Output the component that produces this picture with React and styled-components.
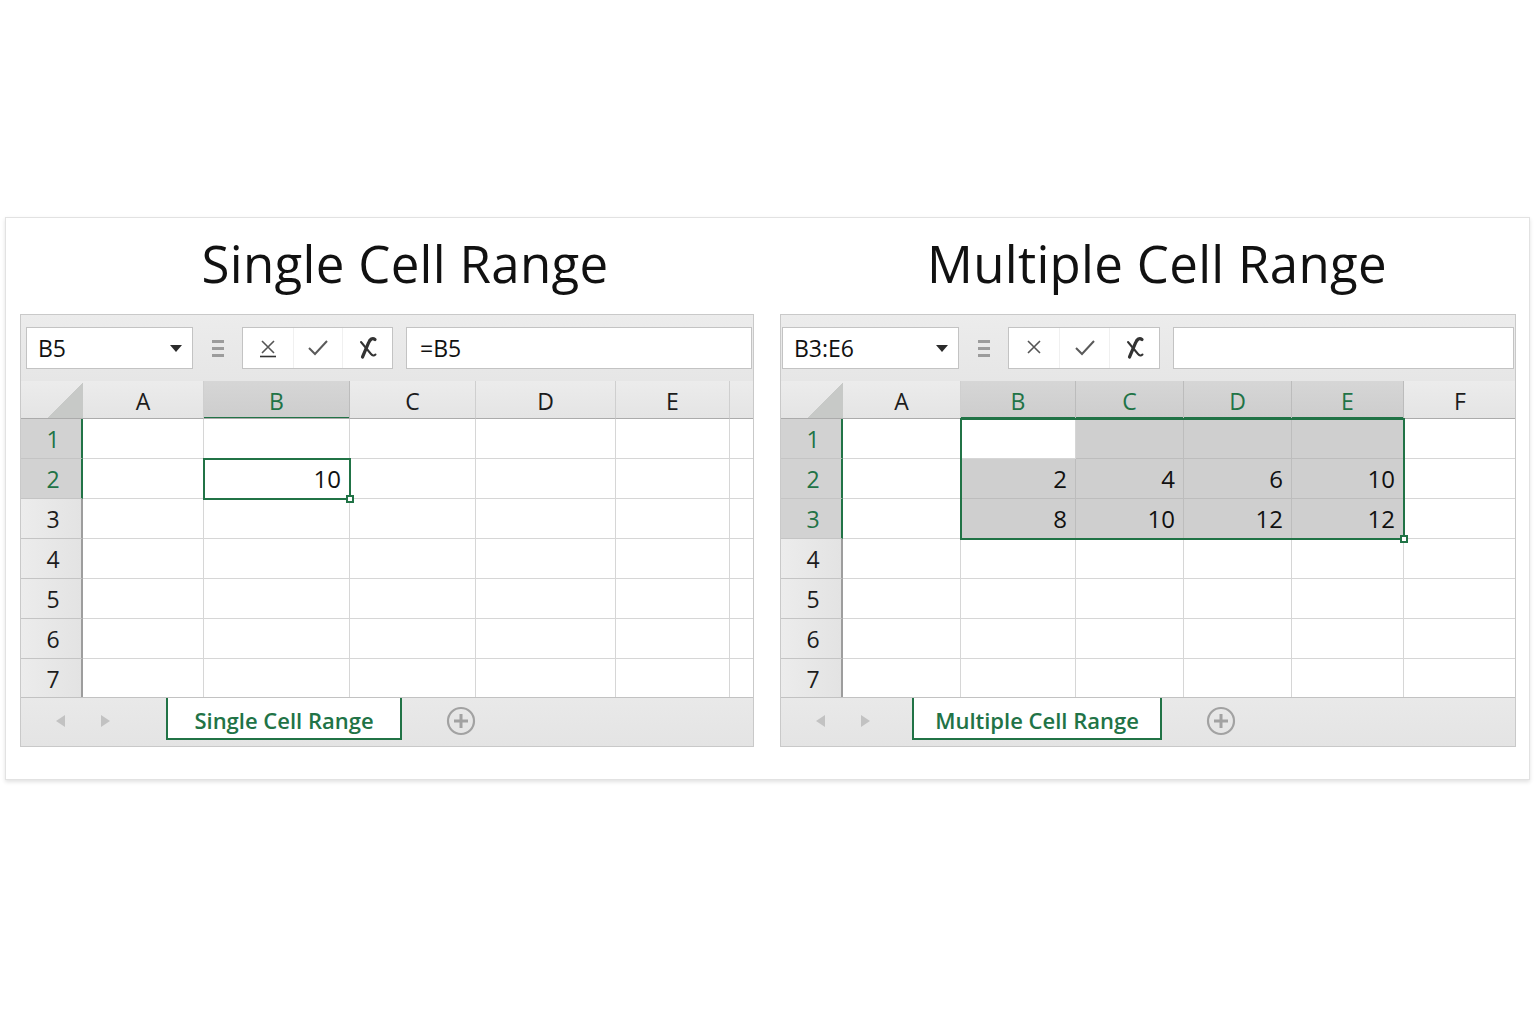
import React from "react";
import styled, { createGlobalStyle } from "styled-components";

const GREEN = "#217346";
const HEADER_H = 38;
const ROW_H = 40;

const Global = createGlobalStyle`
  html, body { margin: 0; padding: 0; background: #ffffff; }
  body { font-family: "Open Sans", "Noto Sans", Arial, sans-serif; color: #111; }
`;

const Page = styled.div`
  width: 1536px;
  height: 1024px;
  padding: 217px 0 0 5px;
  box-sizing: border-box;
`;

const Card = styled.div`
  width: 1525px;
  box-sizing: border-box;
  background: #fff;
  border: 1px solid #e2e2e2;
  box-shadow: 0 2px 4px rgba(0, 0, 0, 0.12);
  padding: 0 13px 32px 14px;
  display: grid;
  grid-template-columns: 734px 736px;
  column-gap: 26px;
`;

const Column = styled.section`
  display: flex;
  flex-direction: column;
`;

const Title = styled.h1`
  margin: 0;
  height: 96px;
  display: flex;
  align-items: center;
  justify-content: center;
  font-family: "Open Sans", "Noto Sans", sans-serif;
  font-weight: 500;
  font-size: 51px;
  letter-spacing: 0.3px;
  color: #111;
  padding: 0 0 6px ${(p) => p.$shift}px;
  box-sizing: border-box;
`;

const Panel = styled.div`
  border: 1px solid #c9c9c9;
  background: #e9e9e9;
  display: flex;
  flex-direction: column;
`;

const Toolbar = styled.div`
  height: 66px;
  display: flex;
  align-items: center;
  padding: 0 1px 0 ${(p) => p.$padLeft}px;
  background: linear-gradient(#ececec, #e6e6e6);
  box-sizing: border-box;
`;

const NameBox = styled.div`
  width: ${(p) => p.$w}px;
  height: 42px;
  box-sizing: border-box;
  background: #fff;
  border: 1px solid #c3c3c3;
  display: flex;
  align-items: center;
  justify-content: space-between;
  padding: 0 10px 0 11px;
  font-size: 23px;
  color: #111;
`;

const DropArrow = styled.span`
  width: 0;
  height: 0;
  border-left: 6px solid transparent;
  border-right: 6px solid transparent;
  border-top: 7px solid #2b2b2b;
`;

const Grip = styled.div`
  width: 49px;
  display: flex;
  flex-direction: column;
  align-items: center;
  gap: 4px;
  & > span {
    width: 12px;
    height: 3px;
    background: #9c9c9c;
  }
`;

const ButtonGroup = styled.div`
  width: ${(p) => p.$w}px;
  height: 42px;
  box-sizing: border-box;
  background: #fff;
  border: 1px solid #c3c3c3;
  display: grid;
  grid-template-columns: 1fr 1fr 1fr;
`;

const IconButton = styled.div`
  display: flex;
  align-items: center;
  justify-content: center;
  & + & {
    border-left: 1px solid #f0f0f0;
  }
`;

const Formula = styled.div`
  flex: 1;
  margin-left: 13px;
  height: 42px;
  box-sizing: border-box;
  background: #fff;
  border: 1px solid #c3c3c3;
  display: flex;
  align-items: center;
  padding-left: 13px;
  font-size: 23px;
  color: #111;
`;

const GridWrap = styled.div`
  position: relative;
  height: ${HEADER_H + 278}px;
  overflow: hidden;
  background: #fff;
`;

const Grid = styled.div`
  display: grid;
  grid-template-columns: ${(p) => p.$cols.map((c) => `${c}px`).join(" ")};
  grid-auto-rows: ${ROW_H}px;
  grid-template-rows: ${HEADER_H}px;
`;

const Corner = styled.div`
  position: relative;
  background: linear-gradient(#ececec, #e4e4e4);
  border-bottom: 1px solid #ababab;
  box-sizing: border-box;
  &::after {
    content: "";
    position: absolute;
    right: 0;
    bottom: 0;
    width: 35px;
    height: 36px;
    background: linear-gradient(to bottom right, transparent 50%, #c7c9c7 50%);
  }
`;

const ColHead = styled.div`
  display: flex;
  align-items: center;
  justify-content: center;
  padding-top: 2px;
  box-sizing: border-box;
  font-size: 23px;
  color: ${(p) => (p.$hl ? GREEN : "#1c1c1c")};
  background: ${(p) => (p.$hl ? "linear-gradient(#d6d6d6, #cdcdcd)" : "linear-gradient(#ececec, #e4e4e4)")};
  border-right: 1px solid ${(p) => (p.$hl ? "#bcbcbc" : "#cfcfcf")};
  border-bottom: 1px solid #ababab;
  box-shadow: ${(p) => (p.$hl ? `inset 0 -1px 0 ${GREEN}` : "none")};
`;

const RowHead = styled.div`
  display: flex;
  align-items: center;
  justify-content: center;
  padding: 0 0 0 4px;
  box-sizing: border-box;
  font-size: 23px;
  color: ${(p) => (p.$hl ? GREEN : "#1c1c1c")};
  background: ${(p) => (p.$hl ? "#d2d2d2" : "linear-gradient(to right, #ececec, #e3e3e3)")};
  border-bottom: 1px solid #c4c4c4;
  border-right: 2px solid ${(p) => (p.$hl ? GREEN : "#9d9d9d")};
`;

const Cell = styled.div`
  display: flex;
  align-items: center;
  justify-content: flex-end;
  padding: 0 8px 0 0;
  box-sizing: border-box;
  font-size: 24px;
  color: #111;
  background: ${(p) => (p.$sel ? "#cfcfcf" : "#fff")};
  border-right: 1px solid ${(p) => (p.$sel ? "#bdbdbd" : "#d6d6d6")};
  border-bottom: 1px solid ${(p) => (p.$sel ? "#bdbdbd" : "#d6d6d6")};
`;

const Selection = styled.div`
  position: absolute;
  box-sizing: border-box;
  border: 2px solid ${GREEN};
  pointer-events: none;
  &::after {
    content: "";
    position: absolute;
    right: -5px;
    bottom: -5px;
    width: 8px;
    height: 8px;
    box-sizing: border-box;
    background: #fff;
    border: 2px solid ${GREEN};
  }
`;

const TabBar = styled.div`
  height: 49px;
  box-sizing: border-box;
  border-top: 1px solid #c2c2c2;
  background: linear-gradient(#e9e9e9, #e4e4e4);
  display: flex;
  align-items: flex-start;
`;

const NavArrows = styled.div`
  width: ${(p) => p.$w}px;
  height: 46px;
  display: flex;
  align-items: center;
  padding-left: 35px;
  gap: 36px;
  box-sizing: border-box;
`;

const Arrow = styled.span`
  width: 0;
  height: 0;
  border-top: 6px solid transparent;
  border-bottom: 6px solid transparent;
  ${(p) => (p.$dir === "left" ? "border-right: 9px solid #c2c2c2;" : "border-left: 9px solid #c2c2c2;")}
`;

const SheetTab = styled.div`
  width: ${(p) => p.$w}px;
  height: 42px;
  box-sizing: border-box;
  background: #fff;
  border: 2px solid ${GREEN};
  border-top: none;
  display: flex;
  align-items: center;
  justify-content: center;
  padding-top: 4px;
  font-size: 22px;
  font-weight: 600;
  color: ${GREEN};
`;

const AddSheet = styled.div`
  margin-left: 44px;
  height: 46px;
  display: flex;
  align-items: center;
`;

const CancelIcon = ({ underline }) => (
  <svg width="22" height="22" viewBox="0 0 22 22">
    <path d="M5 4 L17 16 M17 4 L5 16" stroke="#555" strokeWidth="1.6" fill="none" />
    {underline && <path d="M3 19.5 H19" stroke="#333" strokeWidth="1.6" />}
  </svg>
);

const CheckIcon = () => (
  <svg width="24" height="22" viewBox="0 0 24 22">
    <path d="M3 11 L9 17 L21 4" stroke="#5a5a5a" strokeWidth="2" fill="none" strokeLinejoin="miter" />
  </svg>
);

const FxIcon = () => (
  <svg width="24" height="26" viewBox="0 0 24 26">
    <path d="M19 4.5 C16.5 2.5 14 4 12.5 8 L6.5 22" stroke="#333" strokeWidth="3.2" fill="none" strokeLinecap="round" />
    <path d="M5 7 L15 19 C16.5 20.8 18 21 19.5 19.5" stroke="#333" strokeWidth="2" fill="none" strokeLinecap="round" />
  </svg>
);

const PlusCircle = () => (
  <svg width="30" height="30" viewBox="0 0 30 30">
    <circle cx="15" cy="15" r="13" stroke="#a2a2a2" strokeWidth="2.2" fill="none" />
    <path d="M15 8 V22 M8 15 H22" stroke="#a2a2a2" strokeWidth="3" />
  </svg>
);

const sum = (arr) => arr.reduce((a, b) => a + b, 0);

function Sheet({ cfg }) {
  const { cols, letters, data, hlCols, hlRows, sel, active } = cfg;
  const isSel = (r, c) =>
    r >= sel.r0 && r <= sel.r1 && c >= sel.c0 && c <= sel.c1 && !(r === active.r && c === active.c);
  const selStyle = {
    left: sum(cols.slice(0, sel.c0 + 1)) - 1,
    top: HEADER_H + sel.r0 * ROW_H - 1,
    width: sum(cols.slice(sel.c0 + 1, sel.c1 + 2)) + 2,
    height: (sel.r1 - sel.r0 + 1) * ROW_H + 2,
  };
  const rows = [0, 1, 2, 3, 4, 5, 6];
  return (
    <GridWrap>
      <Grid $cols={cols}>
        <Corner />
        {letters.map((l, i) => (
          <ColHead key={"h" + i} $hl={hlCols.includes(i)}>
            {l}
          </ColHead>
        ))}
        {rows.map((r) => (
          <React.Fragment key={"r" + r}>
            <RowHead $hl={hlRows.includes(r)}>{r + 1}</RowHead>
            {letters.map((l, c) => (
              <Cell key={c} $sel={isSel(r, c)}>
                {(data[r] && data[r][c]) ?? ""}
              </Cell>
            ))}
          </React.Fragment>
        ))}
      </Grid>
      <Selection style={selStyle} />
    </GridWrap>
  );
}

function Workbook({ cfg }) {
  return (
    <Column>
      <Title $shift={cfg.titleShift}>{cfg.title}</Title>
      <Panel>
        <Toolbar $padLeft={cfg.padLeft}>
          <NameBox $w={cfg.nameW}>
            <span>{cfg.name}</span>
            <DropArrow />
          </NameBox>
          <Grip>
            <span />
            <span />
            <span />
          </Grip>
          <ButtonGroup $w={cfg.btnW}>
            <IconButton>
              <CancelIcon underline={cfg.underline} />
            </IconButton>
            <IconButton>
              <CheckIcon />
            </IconButton>
            <IconButton>
              <FxIcon />
            </IconButton>
          </ButtonGroup>
          <Formula>{cfg.formula}</Formula>
        </Toolbar>
        <Sheet cfg={cfg} />
        <TabBar>
          <NavArrows $w={cfg.tabLeft}>
            <Arrow $dir="left" />
            <Arrow $dir="right" />
          </NavArrows>
          <SheetTab $w={cfg.tabW}>{cfg.title}</SheetTab>
          <AddSheet>
            <PlusCircle />
          </AddSheet>
        </TabBar>
      </Panel>
    </Column>
  );
}

const single = {
  title: "Single Cell Range",
  titleShift: 36,
  name: "B5",
  formula: "=B5",
  underline: true,
  padLeft: 5,
  nameW: 167,
  btnW: 151,
  cols: [62, 121, 146, 126, 140, 114, 25],
  letters: ["A", "B", "C", "D", "E", ""],
  data: { 1: { 1: "10" } },
  hlCols: [1],
  hlRows: [0, 1],
  sel: { r0: 1, r1: 1, c0: 1, c1: 1 },
  active: { r: 1, c: 1 },
  tabLeft: 145,
  tabW: 236,
};

const multiple = {
  title: "Multiple Cell Range",
  titleShift: 18,
  name: "B3:E6",
  formula: "",
  underline: false,
  padLeft: 1,
  nameW: 177,
  btnW: 152,
  cols: [62, 118, 115, 108, 108, 112, 113],
  letters: ["A", "B", "C", "D", "E", "F"],
  data: {
    1: { 1: "2", 2: "4", 3: "6", 4: "10" },
    2: { 1: "8", 2: "10", 3: "12", 4: "12" },
  },
  hlCols: [1, 2, 3, 4],
  hlRows: [0, 1, 2],
  sel: { r0: 0, r1: 2, c0: 1, c1: 4 },
  active: { r: 0, c: 1 },
  tabLeft: 131,
  tabW: 250,
};

export default function App() {
  return (
    <>
      <Global />
      <Page>
        <Card>
          <Workbook cfg={single} />
          <Workbook cfg={multiple} />
        </Card>
      </Page>
    </>
  );
}
